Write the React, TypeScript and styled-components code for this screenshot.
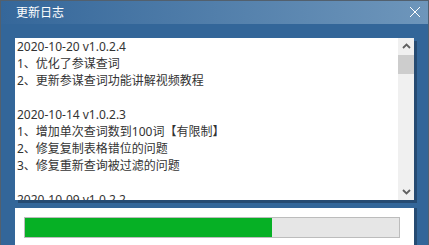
import styled, { createGlobalStyle } from "styled-components";

const GlobalStyle = createGlobalStyle`
  html, body {
    margin: 0;
    padding: 0;
    width: 429px;
    height: 245px;
    overflow: hidden;
  }
  * {
    box-sizing: border-box;
  }
`;

const StyledWindow = styled.div`
  width: 429px;
  height: 245px;
  background: #336699;
  border: 1px solid #52606e;
  border-bottom: none;
  display: flex;
  flex-direction: column;
  overflow: hidden;
  font-family: "Noto Sans", "Noto Sans CJK SC", sans-serif;
`;

const StyledTitleBar = styled.div`
  height: 23px;
  flex-shrink: 0;
  display: flex;
  align-items: center;
  justify-content: space-between;
  padding: 0 6px 1px 15px;
  background: linear-gradient(to right, #35679a, #6e96bb);
  color: #ffffff;
  font-size: 12px;

  .close {
    width: 12px;
    height: 12px;
    display: flex;
    margin-right: 1px;
  }
`;

const StyledContent = styled.div`
  flex: 1;
  display: flex;
  flex-direction: column;
  gap: 8px;
  padding: 14px 14px 0 14px;
`;

const StyledLogBox = styled.div`
  height: 162px;
  flex-shrink: 0;
  display: flex;
  background: #ffffff;
  box-shadow: 3px 3px 0 #264b72;
`;

const StyledLogText = styled.div`
  flex: 1;
  overflow: hidden;
  padding: 0 0 0 2px;
  color: #333333;
  font-size: 12px;
  line-height: 17px;
  white-space: pre;
`;

const StyledScrollBar = styled.div`
  width: 16px;
  flex-shrink: 0;
  display: flex;
  flex-direction: column;
  background: #f0f0f0;

  .thumb {
    height: 19px;
    margin-top: 1px;
    background: #cdcdcd;
  }
  .spacer {
    flex: 1;
  }
`;

const StyledArrow = styled.div`
  height: 16px;
  display: flex;
  align-items: center;
  justify-content: center;
`;

const StyledProgressPanel = styled.div`
  flex: 1;
  background: #ffffff;
  box-shadow: 3px 0 0 #264b72;
  padding: 9px 0 0 9px;
`;

const StyledProgress = styled.div`
  width: 376px;
  height: 21px;
  border: 1px solid #bcbcbc;
  background: #e6e6e6;

  .fill {
    height: 100%;
    background: #06b025;
  }
`;

const logLines = [
  "2020-10-20 v1.0.2.4",
  "1、优化了参谋查词",
  "2、更新参谋查词功能讲解视频教程",
  "",
  "2020-10-14 v1.0.2.3",
  "1、增加单次查词数到100词【有限制】",
  "2、修复复制表格错位的问题",
  "3、修复重新查询被过滤的问题",
  "",
  "2020-10-09 v1.0.2.2",
];

const Chevron = ({ up }: { up?: boolean }) => (
  <svg width="9" height="6" viewBox="0 0 9 6">
    <polyline
      points={up ? "1,5 4.5,1.5 8,5" : "1,1 4.5,4.5 8,1"}
      fill="none"
      stroke="#606060"
      strokeWidth="1.8"
    />
  </svg>
);

const App = () => {
  const progress = 66;
  return (
    <>
      <GlobalStyle />
      <StyledWindow>
        <StyledTitleBar>
          <span>更新日志</span>
          <span className="close">
            <svg width="12" height="12" viewBox="0 0 12 12">
              <path d="M1 1 L11 11 M11 1 L1 11" stroke="#ffffff" strokeWidth="1" />
            </svg>
          </span>
        </StyledTitleBar>
        <StyledContent>
          <StyledLogBox>
            <StyledLogText>
              {logLines.map((line, i) => (
                <div key={i}>{line || " "}</div>
              ))}
            </StyledLogText>
            <StyledScrollBar>
              <StyledArrow>
                <Chevron up />
              </StyledArrow>
              <div className="thumb" />
              <div className="spacer" />
              <StyledArrow>
                <Chevron />
              </StyledArrow>
            </StyledScrollBar>
          </StyledLogBox>
          <StyledProgressPanel>
            <StyledProgress>
              <div className="fill" style={{ width: `${progress}%` }} />
            </StyledProgress>
          </StyledProgressPanel>
        </StyledContent>
      </StyledWindow>
    </>
  );
};

export default App;
